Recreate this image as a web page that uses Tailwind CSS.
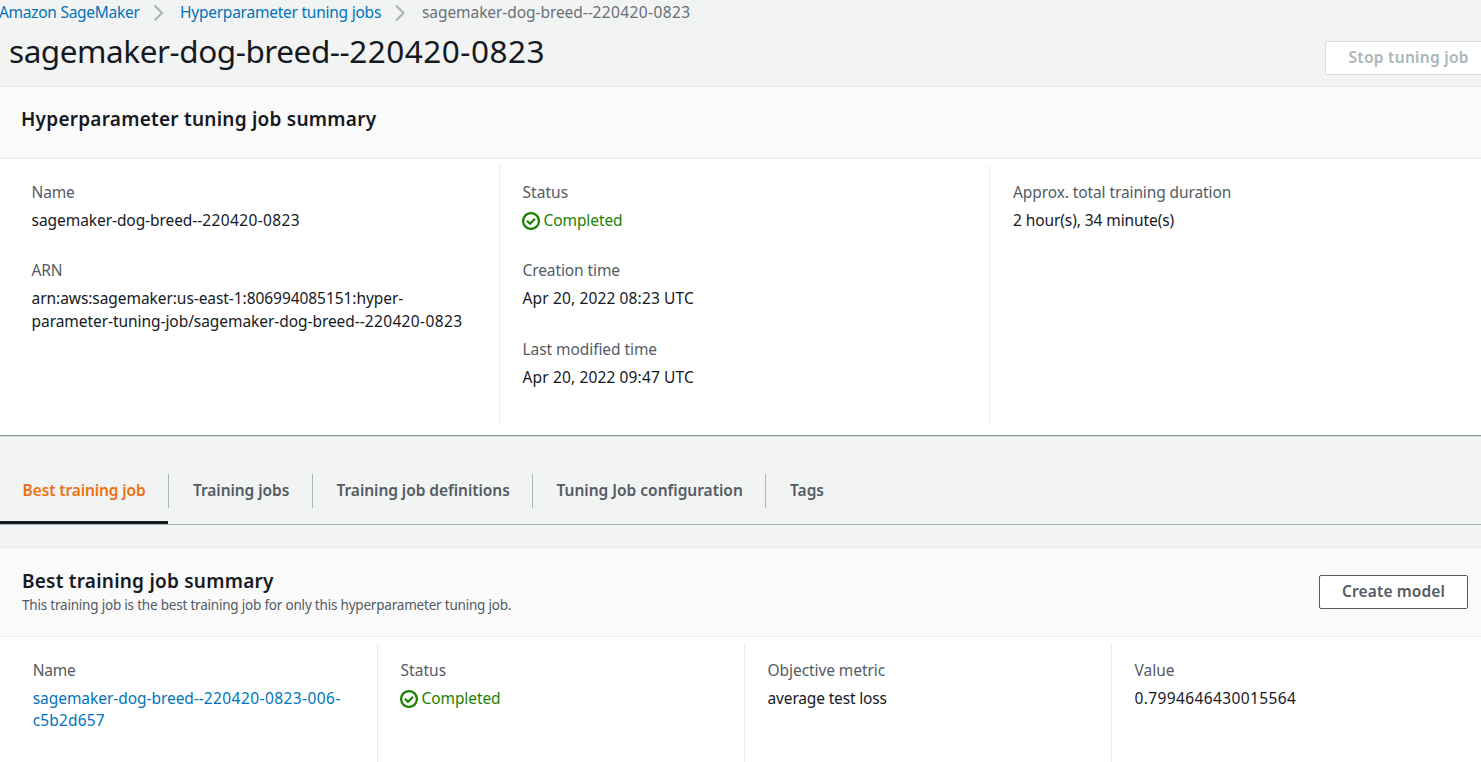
<!DOCTYPE html>
<html lang="en">
<head>
<meta charset="utf-8">
<title>Amazon SageMaker</title>
<script src="https://cdn.jsdelivr.net/npm/@tailwindcss/browser@4"></script>
</head>
<body class="h-[762px] w-[1481px] overflow-hidden bg-[#f2f3f3] font-['Noto_Sans',sans-serif] text-[15.5px] leading-[22px] whitespace-nowrap text-[#16191f]">
<div class="flex h-full flex-col">

  <header class="h-[86px] shrink-0">
    <nav class="-ml-px flex h-[25px] items-center text-[#0073bb]">
      <a class="-mt-0.5 w-[154px] tracking-[-0.28px]">Amazon SageMaker</a>
      <svg class="mr-[15px] h-[18px] w-3" viewBox="0 0 12 18" fill="none" stroke="#aab7b8" stroke-width="2.2"><path d="M1.5 1.5 9 9 1.5 16.5"/></svg>
      <a class="-mt-0.5 w-[215px] tracking-[-0.24px]">Hyperparameter tuning jobs</a>
      <svg class="mr-[15px] h-[18px] w-3" viewBox="0 0 12 18" fill="none" stroke="#aab7b8" stroke-width="2.2"><path d="M1 1.5 8.5 9 1 16.5"/></svg>
      <span class="-mt-0.5 text-[#687078]"><span class="tracking-[-0.07px]">sagemaker-dog-breed--</span><span class="tracking-[0.38px]">220420-0823</span></span>
    </nav>
    <div class="flex items-start justify-between pl-[9px]">
      <h1 class="mt-1 text-[31.5px] leading-[44px]"><span class="tracking-[-0.45px]">sagemaker-dog-breed--</span><span class="tracking-[0.5px]">220420-0823</span></h1>
      <button class="-mr-2 mt-4 h-[34px] w-[164px] rounded-[2px] border border-[#d5dbdb] bg-white pl-[22.5px] text-left font-semibold leading-[30px] tracking-[0.3px] text-[#aab7b8]"><span class="-mt-0.5 block">Stop tuning job</span></button>
    </div>
  </header>

  <section class="flex h-[350px] shrink-0 flex-col border-b border-[#879596] bg-white">
    <div class="h-[73px] border-y border-[#eaeded] bg-[#fafafa] pt-[18px] pl-[21px]">
      <h2 class="text-[19px] leading-[28px] font-semibold tracking-[0.24px]">Hyperparameter tuning job summary</h2>
    </div>
    <div class="mt-[6px] flex h-[258px]">
      <div class="w-[500px] border-r border-[#eaeded] pt-4 pl-[31.6px]">
        <div class="tracking-[-0.2px] text-[#545b64]">Name</div>
        <div class="mt-[6px]"><span class="tracking-[-0.07px]">sagemaker-dog-breed--</span><span class="tracking-[0.38px]">220420-0823</span></div>
        <div class="mt-7 tracking-[-0.2px] text-[#545b64]">ARN</div>
        <div class="mt-[6px] leading-[23px] tracking-[-0.065px]">arn:aws:sagemaker:us-east-1:806994085151:hyper-</div>
        <div class="leading-[23px]"><span class="tracking-[-0.06px]">parameter-tuning-job/sagemaker-dog-breed--</span><span class="tracking-[0.38px]">220420-0823</span></div>
      </div>
      <div class="w-[490px] border-r border-[#eaeded] pt-4 pl-[22.5px]">
        <div class="tracking-[0.05px] text-[#545b64]">Status</div>
        <div class="mt-[6px] flex items-center text-[#1d8102]">
          <svg class="mt-px mr-[3px] -ml-[0.5px] h-[18px] w-[18px]" viewBox="0 0 18 18" fill="none" stroke="#1d8102" stroke-width="2.25"><circle cx="9" cy="9" r="7.9"/><path d="m5 8.7 3 3 5-5"/></svg>
          <span class="ml-[0.5px] tracking-[-0.09px]">Completed</span>
        </div>
        <div class="mt-7 tracking-[-0.1px] text-[#545b64]">Creation time</div>
        <div class="mt-[6px] tracking-[0.14px]">Apr 20, 2022 08:23 UTC</div>
        <div class="mt-[29px] tracking-[-0.07px] text-[#545b64]">Last modified time</div>
        <div class="mt-[6px] tracking-[0.14px]">Apr 20, 2022 09:47 UTC</div>
      </div>
      <div class="pt-4 pl-[23px]">
        <div class="tracking-[-0.1px] text-[#545b64]">Approx. total training duration</div>
        <div class="mt-[6px] tracking-[-0.09px]">2 hour(s), 34 minute(s)</div>
      </div>
    </div>
  </section>

  <div class="flex h-[89px] shrink-0 items-start border-t border-b border-t-[#d5dbdb] border-b-[#aab7b8] font-semibold text-[#545b64]">
    <div class="h-[87px] w-[168px] border-b-[3px] border-[#16191f] pt-[42px] pl-[22.6px] tracking-[-0.12px] text-[#ec7211]">Best training job</div>
    <div class="mt-[37px] h-[34px] w-[144px] border-l border-[#aab7b8] pt-[5px] pl-6 tracking-[-0.07px]">Training jobs</div>
    <div class="mt-[37px] h-[34px] w-[220px] border-l border-[#aab7b8] pt-[5px] pl-[23.5px] tracking-[-0.05px]">Training job definitions</div>
    <div class="mt-[37px] h-[34px] w-[233px] border-l border-[#aab7b8] pt-[5px] pl-[23.5px] tracking-[-0.01px]">Tuning Job configuration</div>
    <div class="mt-[37px] h-[34px] border-l border-[#aab7b8] pt-[5px] pl-6">Tags</div>
  </div>

  <section class="mt-[22px] flex flex-1 flex-col bg-white">
    <div class="flex h-[90px] shrink-0 items-start justify-between border-y border-[#eaeded] bg-[#fafafa] pl-[22px]">
      <div class="pt-[19px]">
        <h2 class="text-[19px] leading-[28px] font-semibold tracking-[0.23px]">Best training job summary</h2>
        <p class="text-[13.5px] leading-5 tracking-[-0.205px] text-[#545b64]">This training job is the best training job for only this hyperparameter tuning job.</p>
      </div>
      <button class="mt-[27px] mr-[13px] h-[34px] w-[149px] rounded-[2px] border border-[#545b64] bg-white text-center font-semibold leading-[30px] tracking-[0.13px] text-[#545b64]"><span class="-mt-0.5 block">Create model</span></button>
    </div>
    <div class="mt-[6px] flex flex-1">
      <div class="w-[378px] border-r border-[#eaeded] pt-4 pl-[32.7px]">
        <div class="tracking-[-0.2px] text-[#545b64]">Name</div>
        <div class="mt-[6px] text-[#0073bb]"><div><span class="tracking-[-0.05px]">sagemaker-dog-breed--</span><span class="tracking-[0.43px]">220420-0823-006-</span></div><div class="tracking-[0.15px]">c5b2d657</div></div>
      </div>
      <div class="w-[367px] border-r border-[#eaeded] pt-4 pl-[22.5px]">
        <div class="tracking-[0.05px] text-[#545b64]">Status</div>
        <div class="mt-[6px] flex items-center text-[#1d8102]">
          <svg class="mt-px mr-[3px] -ml-[0.5px] h-[18px] w-[18px]" viewBox="0 0 18 18" fill="none" stroke="#1d8102" stroke-width="2.25"><circle cx="9" cy="9" r="7.9"/><path d="m5 8.7 3 3 5-5"/></svg>
          <span class="ml-[0.5px] tracking-[-0.09px]">Completed</span>
        </div>
      </div>
      <div class="w-[367px] border-r border-[#eaeded] pt-4 pl-[22.6px]">
        <div class="tracking-[-0.08px] text-[#545b64]">Objective metric</div>
        <div class="mt-[6px] tracking-[-0.17px]">average test loss</div>
      </div>
      <div class="pt-4 pl-[22.6px]">
        <div class="text-[#545b64]">Value</div>
        <div class="mt-[6px] tracking-[0.37px]">0.7994646430015564</div>
      </div>
    </div>
  </section>
</div>
</body>
</html>
